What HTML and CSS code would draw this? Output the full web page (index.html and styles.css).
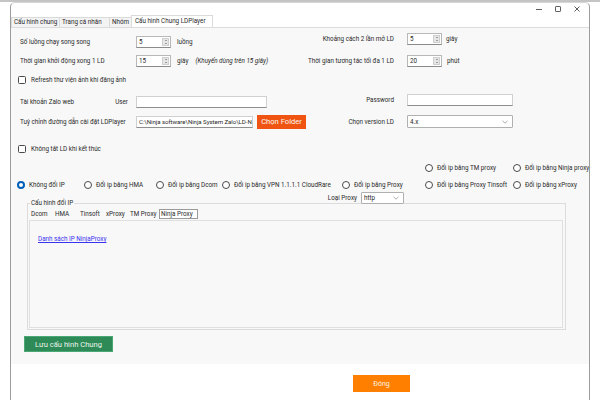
FILE: index.html
```html
<!DOCTYPE html>
<html lang="vi">
<head>
<meta charset="utf-8">
<title>Cấu hình Chung LDPlayer</title>
<link rel="stylesheet" href="styles.css">
</head>
<body>
<div class="topstrip"></div>
<div class="window">
  <div class="titlebar">
    <svg class="ctl" width="8" height="8" viewBox="0 0 8 8"><path d="M1 4.5H7" stroke="#333" stroke-width="0.8"/></svg>
    <svg class="ctl" width="8" height="8" viewBox="0 0 8 8"><rect x="1.5" y="1.5" width="5" height="5" rx="0.6" fill="none" stroke="#333" stroke-width="0.8"/></svg>
    <svg class="ctl" width="8" height="8" viewBox="0 0 8 8"><path d="M1.5 1.5L6.5 6.5M6.5 1.5L1.5 6.5" stroke="#333" stroke-width="0.8"/></svg>
  </div>
  <div class="tabs">
    <div class="tab t1">Cấu hình chung</div>
    <div class="tab t2">Trang cá nhân</div>
    <div class="tab t3">Nhóm</div>
    <div class="tab active">Cấu hình Chung LDPlayer</div>
  </div>
  <div class="panel">
    <div class="form">
      <div class="cell lbl low3">Số luồng chạy song song</div>
      <div class="cell low3">
        <div class="spin"><span>5</span><div class="arrows"><i class="up"></i><i class="down"></i></div></div>
        <span class="unit u6">luồng</span>
      </div>
      <div class="cell rlbl">Khoảng cách 2 lần mở LD</div>
      <div class="cell">
        <div class="spin"><span>5</span><div class="arrows"><i class="up"></i><i class="down"></i></div></div>
        <span class="unit u4">giây</span>
      </div>

      <div class="cell lbl">Thời gian khởi động xong 1 LD</div>
      <div class="cell">
        <div class="spin"><span>15</span><div class="arrows"><i class="up"></i><i class="down"></i></div></div>
        <span class="unit u6">giây</span>
        <span class="note">(Khuyến dùng trên 15 giây)</span>
      </div>
      <div class="cell rlbl">Thời gian tương tác tối đa 1 LD</div>
      <div class="cell">
        <div class="spin"><span>20</span><div class="arrows"><i class="up"></i><i class="down"></i></div></div>
        <span class="unit u5">phút</span>
      </div>

      <label class="cell check full"><span class="box"></span>Refresh thư viện ảnh khi đăng ảnh</label>

      <div class="cell lbl low3 h10 between"><span>Tài khoản Zalo web</span><span class="user">User</span></div>
      <div class="cell low3 h10"><div class="input h10"></div></div>
      <div class="cell rlbl h11">Password</div>
      <div class="cell h11"><div class="input pw h11"></div></div>

      <div class="cell lbl low1">Tuỳ chỉnh đường dẫn cài đặt LDPlayer</div>
      <div class="cell top">
        <div class="input path low1"><span>C:\Ninja software\Ninja System Zalo\LD-Ninja-</span></div>
        <button class="btn-folder">Chọn Folder</button>
      </div>
      <div class="cell rlbl h13">Chọn version LD</div>
      <div class="cell h13">
        <div class="select ver"><span>4.x</span><svg width="6" height="4" viewBox="0 0 6 4"><path d="M0.5 0.8L3 3.2L5.5 0.8" fill="none" stroke="#777" stroke-width="0.6"/></svg></div>
      </div>

      <label class="cell check full"><span class="box"></span>Không tắt LD khi kết thúc</label>
    </div>

    <div class="radios">
      <label class="radio c6"><span class="dot"></span>Đổi ip bằng TM proxy</label>
      <label class="radio c7"><span class="dot"></span>Đổi ip bằng Ninja proxy</label>

      <label class="radio r2"><span class="dot on"></span>Không đổi IP</label>
      <label class="radio r2"><span class="dot"></span>Đổi ip bằng HMA</label>
      <label class="radio r2"><span class="dot"></span>Đổi ip bằng Dcom</label>
      <label class="radio r2"><span class="dot"></span>Đổi ip bằng VPN 1.1.1.1 CloudRare</label>
      <label class="radio r2"><span class="dot"></span>Đổi ip bằng Proxy</label>
      <label class="radio r2"><span class="dot"></span>Đổi ip bằng Proxy Tinsoft</label>
      <label class="radio r2"><span class="dot"></span>Đổi ip bằng xProxy</label>

      <div class="proxytype">
        <span>Loại Proxy</span>
        <div class="select ptype"><span>http</span><svg width="6" height="4" viewBox="0 0 6 4"><path d="M0.5 0.8L3 3.2L5.5 0.8" fill="none" stroke="#777" stroke-width="0.6"/></svg></div>
      </div>
    </div>

    <fieldset class="group">
      <legend>Cấu hình đổi IP</legend>
      <div class="itabs">
        <div class="itab">Dcom</div>
        <div class="itab">HMA</div>
        <div class="itab">Tinsoft</div>
        <div class="itab">xProxy</div>
        <div class="itab">TM Proxy</div>
        <div class="itab sel">Ninja Proxy</div>
      </div>
      <div class="ipanel">
        <a class="link" href="#">Danh sách IP NinjaProxy</a>
      </div>
    </fieldset>

    <button class="btn-green">Lưu cấu hình Chung</button>
  </div>
  <div class="footer">
    <button class="btn-close">Đóng</button>
  </div>
</div>
</body>
</html>
```
FILE: styles.css
```css
* { box-sizing: border-box; }
html, body { margin: 0; padding: 0; }
body {
  width: 600px;
  height: 400px;
  overflow: hidden;
  background: #ffffff;
  font-family: Roboto, "Noto Sans", sans-serif;
  font-size: 6.3px;
  color: #2a2a2a;
  line-height: 8px;
}
.topstrip { height: 2px; background: #c4c4c4; }

.window {
  margin-left: 10px;
  width: 580px;
  height: 398px;
  background: #ffffff;
  border: 1px solid #9c9c9c;
  border-top-color: #d6d6d6;
  border-bottom: none;
  border-radius: 5px 5px 0 0;
  display: flex;
  flex-direction: column;
  overflow: hidden;
}

.titlebar {
  height: 12px;
  display: flex;
  justify-content: flex-end;
  align-items: center;
  gap: 11px;
  padding-right: 8px;
}
.ctl { display: block; }

.tabs {
  height: 12px;
  display: flex;
  align-items: flex-end;
}
.tab {
  height: 10px;
  line-height: 9px;
  padding-left: 2px;
  background: #f3f3f3;
  border: 1px solid #dadada;
  border-bottom: none;
  margin-right: -1px;
  white-space: nowrap;
  overflow: hidden;
}
.t1 { width: 49px; }
.t2 { width: 51px; }
.t3 { width: 23px; }
.tab.active {
  height: 12px;
  line-height: 11px;
  width: 82px;
  background: #ffffff;
  padding-left: 3px;
}

.panel {
  height: 337px;
  background: #f8f8f8;
  border-top: 1px solid #dcdcdc;
  padding-top: 5px;
  flex: none;
}

.form {
  display: grid;
  grid-template-columns: 116px 170px 101px 1fr;
  grid-template-rows: 22px 19px 20px 21px 28px 13px;
  padding-left: 9px;
}
.cell {
  display: flex;
  align-items: center;
  align-self: start;
  height: 12px;
  white-space: nowrap;
}
.cell.top { align-items: flex-start; height: 14px; }
.low3 { margin-top: 3px; }
.low1 { margin-top: 1px; }
.h10 { height: 10px; }
.h11 { height: 11px; }
.h13 { height: 13px; }
.between { justify-content: space-between; padding-right: 8px; }
.rlbl { justify-content: flex-end; padding-right: 13px; }
.full { grid-column: 1 / -1; }

.spin {
  width: 35px;
  height: 12px;
  background: #ffffff;
  border: 1px solid #b8b8b8;
  border-bottom-color: #8a8a8a;
  display: flex;
  align-items: center;
  justify-content: space-between;
  padding-left: 2px;
  padding-right: 1px;
}
.arrows {
  width: 7px;
  height: 8px;
  display: flex;
  flex-direction: column;
  background: #e6e6e6;
  border: 1px solid #cfcfcf;
}
.arrows i {
  flex: 1;
  display: flex;
  align-items: center;
  justify-content: center;
}
.arrows i::after {
  content: "";
  width: 0;
  height: 0;
  border-left: 1.5px solid transparent;
  border-right: 1.5px solid transparent;
}
.arrows .up::after { border-bottom: 1.5px solid #555; }
.arrows .down::after { border-top: 1.5px solid #555; }

.unit { display: inline-block; }
.u6 { margin-left: 6px; }
.u5 { margin-left: 5px; }
.u4 { margin-left: 4px; }
.note { margin-left: 7px; font-style: italic; }

.box {
  width: 8px;
  height: 8px;
  border: 1px solid #4a4a4a;
  border-radius: 1.5px;
  background: #ffffff;
  margin-left: -2px;
  margin-right: 5px;
  flex: none;
}

.input {
  width: 131px;
  height: 12px;
  background: #ffffff;
  border: 1px solid #d0d0d0;
  border-bottom-color: #8e8e8e;
  overflow: hidden;
  white-space: nowrap;
}
.input.pw { width: 106px; }
.input.path { display: flex; align-items: center; padding-left: 2px; font-size: 6.1px; letter-spacing: -0.05px; }
.btn-folder {
  margin-left: 4px;
  width: 55px;
  height: 14px;
  border: none;
  background: #ef5412;
  color: #fff4ec;
  font-family: Roboto, "Noto Sans", sans-serif;
  font-size: 7.6px;
  padding: 0;
  line-height: 14px;
}

.select {
  height: 13px;
  background: #ffffff;
  border: 1px solid #b0b0b0;
  border-radius: 1px;
  display: flex;
  align-items: center;
  justify-content: space-between;
  padding: 0 4px 0 2px;
}
.select.ver { width: 106px; }
.select.ptype { width: 43px; height: 12px; }
.select svg { display: block; }

.radios {
  display: grid;
  grid-template-columns: 67px 72px 66px 120px 83px 88px 1fr;
  grid-template-rows: 17px 13px 12px;
  padding-left: 6px;
  margin-top: 6px;
}
.radio {
  display: flex;
  align-items: center;
  height: 12px;
  white-space: nowrap;
  align-self: start;
}
.c6 { grid-column: 6; grid-row: 1; }
.c7 { grid-column: 7; grid-row: 1; }
.r2 { grid-row: 2; }
.dot {
  width: 8px;
  height: 8px;
  border-radius: 50%;
  border: 1px solid #4a4a4a;
  background: #ffffff;
  margin-right: 4px;
  flex: none;
}
.dot.on {
  border: 2.4px solid #005fb8;
  background: #ffffff;
}
.proxytype {
  grid-row: 3;
  grid-column: 4 / 6;
  justify-self: end;
  margin-right: 21px;
  display: flex;
  align-items: center;
  gap: 4px;
  height: 12px;
}

.group {
  margin: -5px 0 0 16px;
  width: 539px;
  padding: 0 0 1px 0;
  border: 1px solid #dcdcdc;
  min-width: 0;
}
.group legend {
  margin-left: 2px;
  padding: 0 1px;
  line-height: 8px;
  color: #2a2a2a;
}
.itabs {
  margin: 2px 0 0 1px;
  height: 11px;
  display: grid;
  grid-template-columns: 24px 25px 26px 24px 31px 39px;
  align-items: start;
}
.itab {
  padding-left: 2px;
  line-height: 11px;
  white-space: nowrap;
}
.itab.sel {
  border: 1px solid #9a9a9a;
  height: 10px;
  line-height: 8px;
  background: #ffffff;
  padding-left: 1px;
}
.ipanel {
  margin-left: 1px;
  width: 534px;
  height: 108px;
  border: 1px solid #e0e0e0;
  background: #f8f8f8;
  padding: 14px 0 0 8px;
}
.link {
  color: #3a33f0;
  text-decoration: underline;
}

.btn-green {
  display: block;
  margin: 6px 0 0 13px;
  width: 89px;
  height: 16px;
  border: 1px solid #4aa877;
  background: #2e8b57;
  color: #eaf3ec;
  font-family: Roboto, "Noto Sans", sans-serif;
  font-size: 7.6px;
  padding: 0;
}

.footer {
  flex: 1;
  background: #ffffff;
  padding: 11px 0 0 342px;
}
.btn-close {
  display: block;
  width: 57px;
  height: 17px;
  border: none;
  background: #ff8000;
  color: #fff3e6;
  font-family: Roboto, "Noto Sans", sans-serif;
  font-size: 7px;
  padding: 0;
}
```
